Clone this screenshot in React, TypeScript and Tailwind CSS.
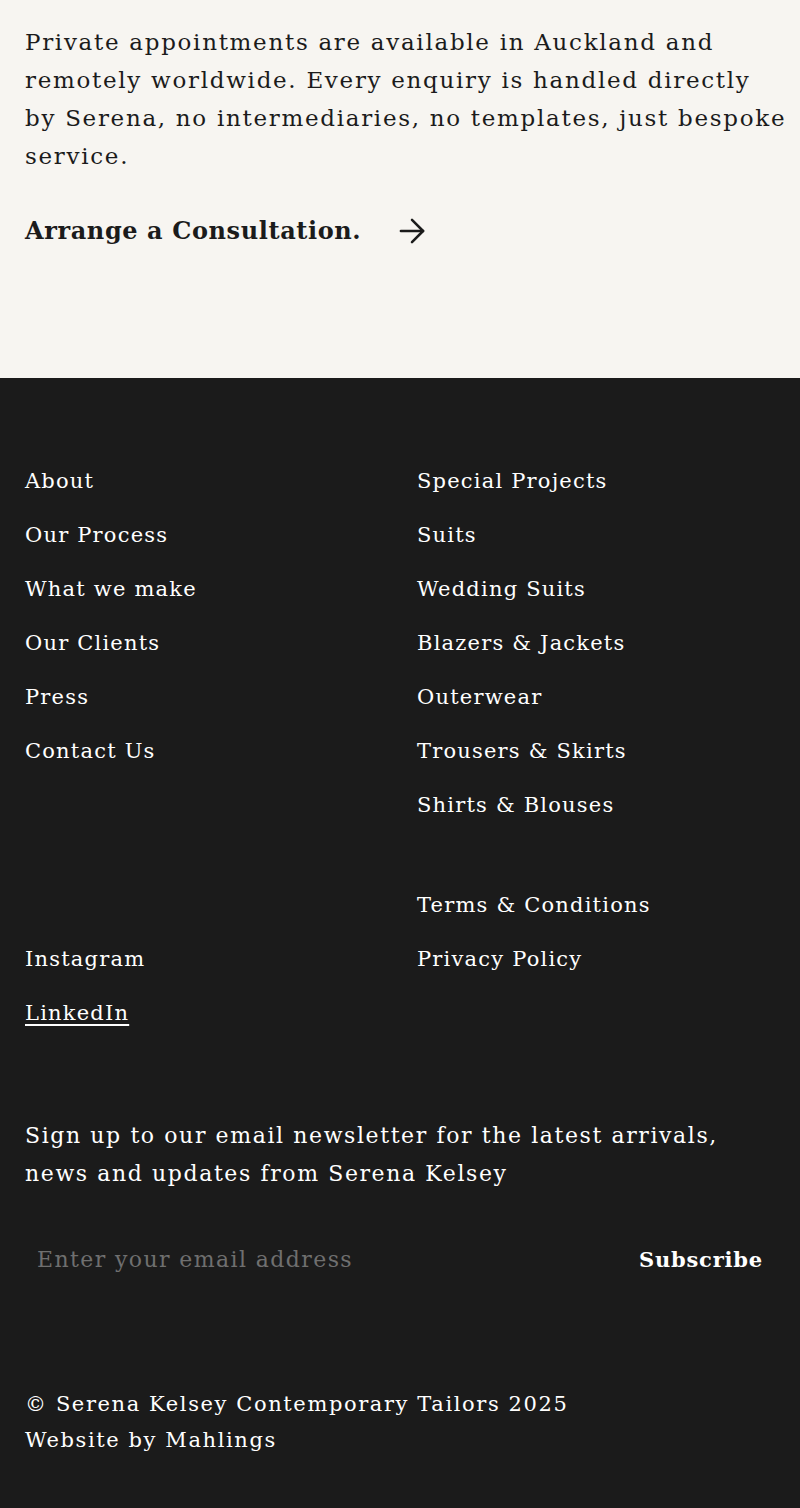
import { ArrowRight } from "lucide-react"

const serif = { fontFamily: '"DejaVu Serif", "Liberation Serif", serif' }

const leftLinks = ["About", "Our Process", "What we make", "Our Clients", "Press", "Contact Us"]
const rightLinks = [
  "Special Projects",
  "Suits",
  "Wedding Suits",
  "Blazers & Jackets",
  "Outerwear",
  "Trousers & Skirts",
  "Shirts & Blouses",
]

function FooterLink({ label, underline }: { label: string; underline?: boolean }) {
  return (
    <a
      href="#"
      className={
        "block h-[54px] text-[21px] leading-[54px] tracking-[1.2px] text-white" +
        (underline ? " underline underline-offset-4" : "")
      }
    >
      {label}
    </a>
  )
}

export default function App() {
  return (
    <div style={serif} className="w-[800px] min-h-[1508px] bg-[#1b1b1b]">
      {/* consultation */}
      <section className="h-[378px] bg-[#f7f5f1] px-[25px] pt-[23px] text-[#1b1b1b]">
        <p className="w-[762px] text-[23px] leading-[38px] tracking-[1.7px]">
          Private appointments are available in Auckland and remotely worldwide. Every enquiry is handled directly by
          Serena, no intermediaries, no templates, just bespoke service.
        </p>
        <a href="#" className="mt-[38px] flex h-[36px] items-center gap-[32px] text-[24px] font-semibold tracking-[0.6px]">
          Arrange a Consultation.
          <ArrowRight className="h-[38px] w-[38px]" strokeWidth={1.6} />
        </a>
      </section>

      {/* footer */}
      <footer className="px-[25px] pt-[76px] text-white">
        <div className="grid grid-cols-2">
          <div className="flex flex-col">
            {leftLinks.map((l) => (
              <FooterLink key={l} label={l} />
            ))}
          </div>
          <div className="flex flex-col pl-[17px]">
            {rightLinks.map((l) => (
              <FooterLink key={l} label={l} />
            ))}
          </div>
        </div>

        <div className="mt-[46px] grid grid-cols-2">
          <div className="flex flex-col pt-[54px]">
            <FooterLink label="Instagram" />
            <FooterLink label="LinkedIn" underline />
          </div>
          <div className="flex flex-col pl-[17px]">
            <FooterLink label="Terms & Conditions" />
            <FooterLink label="Privacy Policy" />
          </div>
        </div>

        <p className="mt-[77px] text-[22px] leading-[38px] tracking-[1.6px]">
          Sign up to our email newsletter for the latest arrivals, news and updates from Serena Kelsey
        </p>

        <form className="mt-[50px] flex items-center justify-between pl-[12px] pr-[12px]">
          <input
            type="email"
            placeholder="Enter your email address"
            className="w-[420px] bg-transparent text-[22px] tracking-[1.4px] text-white outline-none placeholder:text-[#6f6f6f]"
            style={serif}
          />
          <button type="button" className="text-[21px] font-semibold tracking-[0.8px] text-white" style={serif}>
            Subscribe
          </button>
        </form>

        <div className="mt-[110px] text-[21px] leading-[36px] tracking-[1.6px]">
          <p>© Serena Kelsey Contemporary Tailors 2025</p>
          <p>Website by Mahlings</p>
        </div>
      </footer>
    </div>
  )
}
